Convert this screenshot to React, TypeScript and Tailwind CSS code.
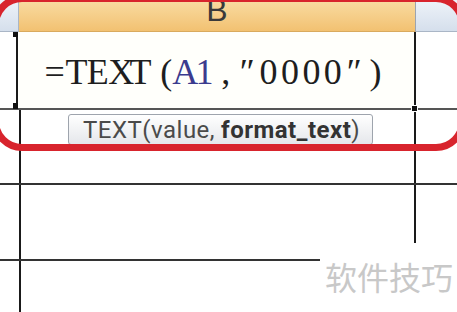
const formula = '=TEXT(A1,″0000″)'.split('');

function Handle({ className }: { className: string }) {
  return <div className={`absolute bg-[#111] ${className}`} />;
}

export default function App() {
  return (
    <div className="relative w-[457px] h-[312px] overflow-hidden bg-white flex flex-col font-['Liberation_Sans',sans-serif]">
      {/* column headers */}
      <div className="flex h-[32px] shrink-0">
        <div className="w-[19px] bg-linear-to-b from-[#eef3f9] to-[#d5dfec] border-r border-b border-[#aab6c6]" />
        <div className="w-[397px] flex justify-center overflow-hidden bg-linear-to-b from-[#f9dca2] to-[#f2c171] border-r border-r-[#9ca4b0] border-b border-b-[#d9aa5e]">
          <span className="-mt-[6px] text-[32px] leading-[32px] text-[#3a3a3a]">B</span>
        </div>
        <div className="flex-1 bg-linear-to-b from-[#eef3f9] to-[#d5dfec] border-b border-[#aab6c6]" />
      </div>

      {/* row 2 - active cell */}
      <div className="flex h-[78px] shrink-0 border-b-2 border-[#555]">
        <div className="w-[16px]" />
        <div className="w-[400px] flex items-center pt-[3px] pl-[26px] border-x-2 border-[#1a1a1a] bg-[#fffffb] font-['Liberation_Serif',serif] text-[36px] leading-[40px]">
          {formula.map((ch, i) => (
            <span
              key={i}
              className={`inline-block w-[21.4px] ${ch === '(' ? 'text-right' : 'text-center'} ${i === 6 || i === 7 ? 'text-[#3b3b8e]' : 'text-[#1e1e1e]'}`}
            >
              {ch}
            </span>
          ))}
        </div>
        <div className="flex-1" />
      </div>

      {/* row 3 - function tooltip */}
      <div className="flex h-[75px] shrink-0 border-b-2 border-[#333]">
        <div className="w-[19px]" />
        <div className="w-[397px] pl-[47px] pt-[4px] border-x-2 border-[#1a1a1a]">
          <div className="inline-flex h-[31px] items-center pl-[14px] pr-[12px] rounded-[3px] border border-[#9ea4ad] bg-linear-to-b from-white to-[#e5e7eb] font-['Roboto',sans-serif] text-[24px] tracking-[0.5px] text-[#4a4a4a]">
            TEXT(value, <span className="ml-[6px] font-bold text-[#333]">format_text</span>)
          </div>
        </div>
        <div className="flex-1" />
      </div>

      {/* row 4 */}
      <div className="flex h-[76px] shrink-0 border-b-2 border-[#333]">
        <div className="w-[19px]" />
        <div className="w-[397px] border-x-2 border-[#1a1a1a]" />
        <div className="flex-1" />
      </div>

      {/* row 5 */}
      <div className="flex flex-1">
        <div className="w-[19px]" />
        <div className="w-[397px] border-x-2 border-[#1a1a1a]" />
        <div className="flex-1" />
      </div>

      {/* selection handles */}
      <Handle className="left-[13px] top-[32px] w-[5px] h-[5px]" />
      <Handle className="left-[13px] top-[103px] w-[5px] h-[6px]" />
      <Handle className="left-[411px] top-[105px] w-[7px] h-[7px] border border-white" />

      {/* red highlight */}
      <div className="absolute left-[-8px] top-[-5px] w-[474px] h-[156px] rounded-[30px] border-[7px] border-[#d8242d] pointer-events-none" />

      {/* watermark */}
      <div className="absolute left-[320px] top-[243px] w-[137px] h-[69px] bg-white pl-[5px] pt-[17px] font-['Noto_Sans_CJK_SC',sans-serif] text-[32px] leading-none text-[#c8c8c8]">
        软件技巧
      </div>
    </div>
  );
}
